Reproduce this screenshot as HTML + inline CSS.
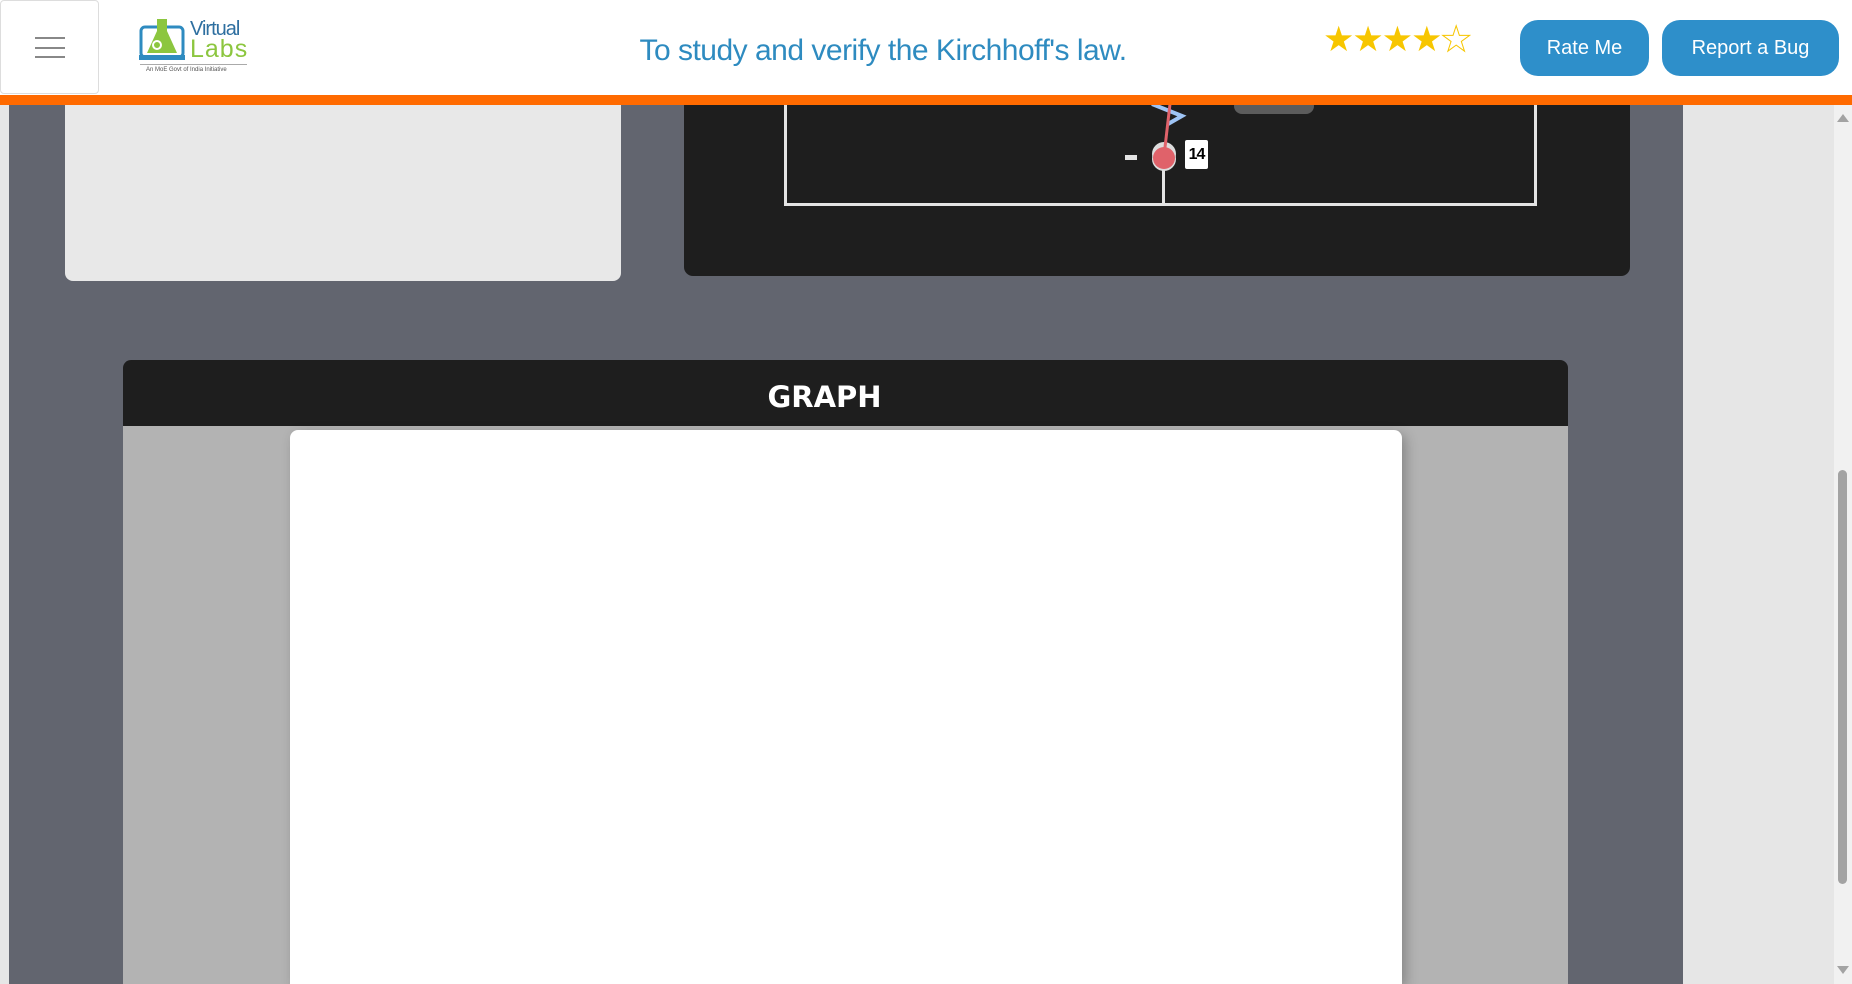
<!DOCTYPE html>
<html style="overflow:hidden;width:1852px;height:984px"><head><meta charset="utf-8"><style>
*{margin:0;padding:0;box-sizing:border-box}
body{width:1852px;height:984px;overflow:hidden;position:relative;background:#62656f;font-family:"Liberation Sans",sans-serif}
.abs{position:absolute}
</style></head><body>
<div class="abs" style="left:0;top:0;width:9px;height:984px;background:#e6e6e6"></div>
<div class="abs" style="left:1683px;top:0;width:151px;height:984px;background:#e6e6e6"></div>
<div class="abs" style="left:1834px;top:104px;width:18px;height:880px;background:#f1f1f1"></div>
<div class="abs" style="left:1838px;top:470px;width:9px;height:414px;background:#a3a3a3;border-radius:5px"></div>
<div class="abs" style="left:1837px;top:114px;width:0;height:0;border-left:6px solid transparent;border-right:6px solid transparent;border-bottom:8px solid #a3a3a3"></div>
<div class="abs" style="left:1837px;top:966px;width:0;height:0;border-left:6px solid transparent;border-right:6px solid transparent;border-top:8px solid #a3a3a3"></div>

<div class="abs" style="left:65px;top:60px;width:556px;height:221px;background:#e8e8e8;border-radius:8px"></div>
<div class="abs" style="left:684px;top:60px;width:946px;height:216px;background:#1e1e1e;border-radius:9px"></div>
<div class="abs" style="left:784px;top:60px;width:753px;height:146px;border:3px solid #e4e4e4;border-top:none"></div>
<div class="abs" style="left:1234px;top:98px;width:80px;height:16px;background:#5c5c5c;border-radius:8px"></div>
<div class="abs" style="left:1162px;top:165px;width:3px;height:40px;background:#e4e4e4"></div>
<svg class="abs" style="left:1140px;top:104px" width="50" height="70">
<path d="M12 0 L42 12 L28 20" stroke="#9ec4f5" stroke-width="4" fill="none"/>
<circle cx="24" cy="50" r="12" fill="#ddd"/>
<circle cx="24" cy="55" r="12" fill="#ddd"/>
<circle cx="24" cy="54" r="11" fill="#e0626a"/>
<path d="M30 0 L24 52" stroke="#e0626a" stroke-width="3"/>
</svg>
<div class="abs" style="left:1125px;top:155px;width:12px;height:5px;background:#e4e4e4"></div>
<div class="abs" style="left:1185px;top:140px;width:23px;height:29px;background:#fff;border-radius:2px;font-weight:bold;font-size:16px;line-height:29px;text-align:center;color:#000;letter-spacing:-1px">14</div>

<div class="abs" style="left:123px;top:360px;width:1445px;height:66px;background:#1e1e1e;border-radius:8px 8px 0 0;color:#fff;font-weight:bold;font-size:29px;line-height:74px;text-align:center;font-family:'DejaVu Sans',sans-serif;padding-right:42px">GRAPH</div>
<div class="abs" style="left:123px;top:426px;width:1445px;height:558px;background:#b3b3b3"></div>
<div class="abs" style="left:290px;top:430px;width:1112px;height:554px;background:#fff;border-radius:8px 8px 0 0;box-shadow:4px 4px 12px rgba(0,0,0,.25)"></div>

<div class="abs" style="left:0;top:0;width:1852px;height:95px;background:#fff"></div>
<div class="abs" style="left:0;top:95px;width:1852px;height:10px;background:#ff6a00"></div>
<div class="abs" style="left:0;top:0;width:99px;height:94px;border:1px solid #ddd;border-radius:4px;background:#fff"></div>
<div class="abs" style="left:35px;top:37px;width:30px;height:2px;background:#888"></div>
<div class="abs" style="left:35px;top:47px;width:30px;height:2px;background:#888"></div>
<div class="abs" style="left:35px;top:56px;width:30px;height:2px;background:#888"></div>
<svg class="abs" style="left:139px;top:17px" width="50" height="45">
<rect x="2" y="10" width="42" height="30" rx="4" fill="none" stroke="#2e8bc0" stroke-width="3"/>
<path d="M18 2 L28 2 L28 14 L38 36 L8 36 L18 14Z" fill="#8cc63f"/>
<rect x="0" y="38" width="46" height="5" fill="#2e8bc0"/>
<circle cx="18" cy="28" r="4" fill="none" stroke="#fff" stroke-width="2"/>
</svg>
<div class="abs" style="left:190px;top:18px;font-size:20px;color:#2e6fa0;letter-spacing:-1px">Virtual</div>
<div class="abs" style="left:190px;top:35px;font-size:25px;color:#8cc63f;font-weight:300;letter-spacing:1px">Labs</div>
<div class="abs" style="left:140px;top:64px;width:107px;height:1px;background:#aaa"></div>
<div class="abs" style="left:146px;top:67px;font-size:6px;color:#555">An MoE Govt of India Initiative</div>

<div class="abs" style="left:540px;top:34px;width:686px;text-align:center;font-size:30px;color:#2e8bc0;letter-spacing:-0.5px">To study and verify the Kirchhoff's law.</div>
<div class="abs" style="left:1323px;top:20px;font-size:35px;color:#f7c600;letter-spacing:-2px">★★★★<span style="color:#fff;-webkit-text-stroke:1px #f7c600">★</span></div>
<div class="abs" style="left:1520px;top:20px;width:129px;height:56px;background:#2e8fca;border-radius:18px;color:#fff;font-size:20px;line-height:56px;text-align:center">Rate Me</div>
<div class="abs" style="left:1662px;top:20px;width:177px;height:56px;background:#2e8fca;border-radius:18px;color:#fff;font-size:20px;line-height:56px;text-align:center">Report a Bug</div>
</body></html>
